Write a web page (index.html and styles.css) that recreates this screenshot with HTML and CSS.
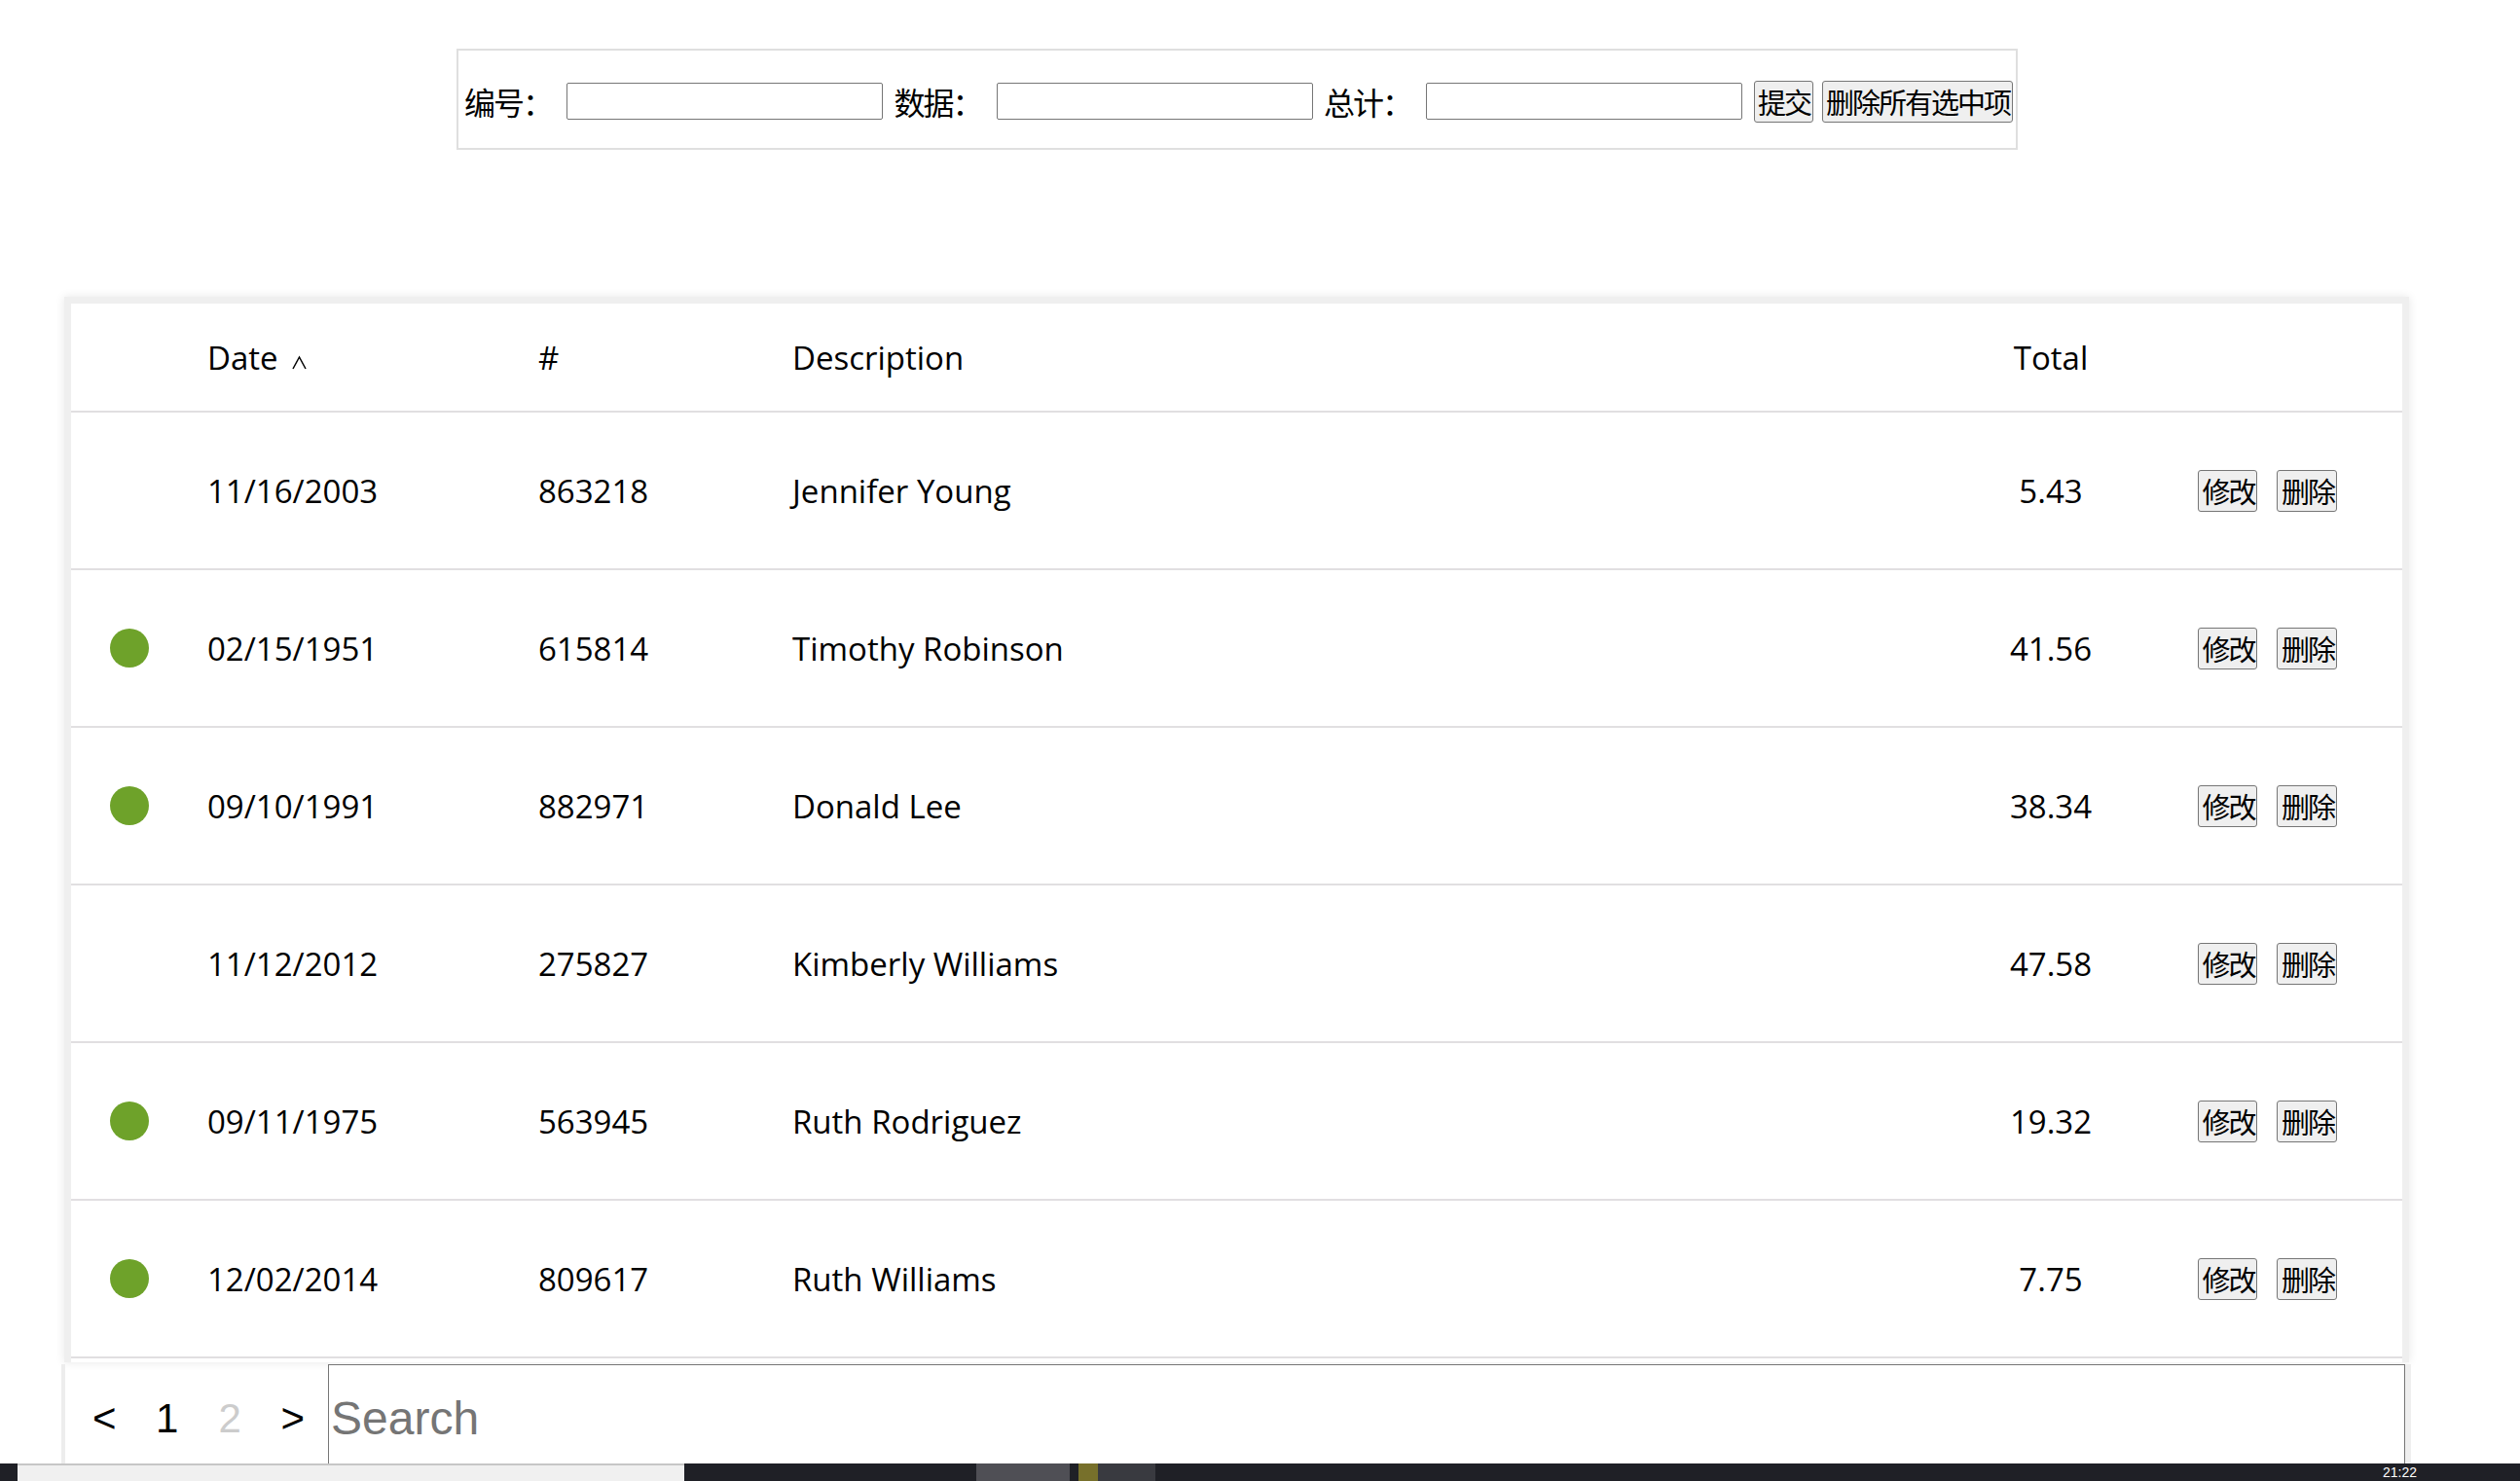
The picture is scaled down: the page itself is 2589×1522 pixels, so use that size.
FILE: index.html
```html
<!DOCTYPE html>
<html lang="zh-CN">
<head>
<meta charset="utf-8">
<title>Table</title>
<link rel="stylesheet" href="styles.css">
</head>
<body>
<form class="toolbar">
  <label class="lbl">编号：</label><input class="field" type="text">
  <label class="lbl">数据：</label><input class="field" type="text">
  <label class="lbl">总计：</label><input class="field last" type="text">
  <button type="button" class="btn">提交</button>
  <button type="button" class="btn">删除所有选中项</button>
</form>

<div class="card">
  <div class="row head">
    <div></div>
    <div class="sortable">Date <svg class="caret" width="17" height="15" viewBox="0 0 17 15"><polyline points="2,14 8.5,2 15,14" fill="none" stroke="#000" stroke-width="1.5"/></svg></div>
    <div>#</div>
    <div>Description</div>
    <div class="num">Total</div>
    <div></div>
  </div>
  <div class="row">
    <div></div>
    <div>11/16/2003</div><div>863218</div><div>Jennifer Young</div><div class="num">5.43</div>
    <div class="acts"><button class="btn sm">修改</button><button class="btn sm">删除</button></div>
  </div>
  <div class="row">
    <div><span class="dot"></span></div>
    <div>02/15/1951</div><div>615814</div><div>Timothy Robinson</div><div class="num">41.56</div>
    <div class="acts"><button class="btn sm">修改</button><button class="btn sm">删除</button></div>
  </div>
  <div class="row">
    <div><span class="dot"></span></div>
    <div>09/10/1991</div><div>882971</div><div>Donald Lee</div><div class="num">38.34</div>
    <div class="acts"><button class="btn sm">修改</button><button class="btn sm">删除</button></div>
  </div>
  <div class="row">
    <div></div>
    <div>11/12/2012</div><div>275827</div><div>Kimberly Williams</div><div class="num">47.58</div>
    <div class="acts"><button class="btn sm">修改</button><button class="btn sm">删除</button></div>
  </div>
  <div class="row">
    <div><span class="dot"></span></div>
    <div>09/11/1975</div><div>563945</div><div>Ruth Rodriguez</div><div class="num">19.32</div>
    <div class="acts"><button class="btn sm">修改</button><button class="btn sm">删除</button></div>
  </div>
  <div class="row">
    <div><span class="dot"></span></div>
    <div>12/02/2014</div><div>809617</div><div>Ruth Williams</div><div class="num">7.75</div>
    <div class="acts"><button class="btn sm">修改</button><button class="btn sm">删除</button></div>
  </div>
</div>

<div class="footer">
  <div class="pager">
    <span class="pg">&lt;</span>
    <span class="pg">1</span>
    <span class="pg off">2</span>
    <span class="pg">&gt;</span>
  </div>
  <input class="search" type="text" placeholder="Search">
</div>

<div class="taskbar">
  <div class="tb-edge"></div>
  <div class="tb-search"></div>
  <div class="tb-gap"></div>
  <div class="tb-app active"></div>
  <div class="tb-gap2"></div>
  <div class="tb-olive"></div>
  <div class="tb-app2"></div>
  <div class="tb-fill"></div>
  <div class="tb-clock">21:22</div>
</div>
</body>
</html>
```

FILE: styles.css
```css
html, body {
  margin: 0;
  padding: 0;
  background: #fff;
}
body {
  font-family: "Open Sans", "Noto Sans", sans-serif;
  color: #000;
  height: 1522px;
  overflow: hidden;
}

/* top form */
.toolbar {
  box-sizing: border-box;
  width: 1604px;
  height: 104px;
  margin: 50px 0 0 469px;
  border: 2px solid #dfdfdf;
  padding: 4px 6px 0 6px;
  display: flex;
  align-items: center;
  font-family: "Noto Sans CJK SC", "Microsoft YaHei", sans-serif;
  font-size: 29px;
}
.lbl {
  width: 105px;
  flex: none;
  font-family: "Noto Sans CJK SC", "Microsoft YaHei", sans-serif;
  font-size: 32px;
  letter-spacing: -2px;
  white-space: nowrap;
  line-height: 1;
}
.field {
  box-sizing: border-box;
  flex: none;
  width: 325px;
  height: 38px;
  border: 1px solid #767676;
  border-radius: 2px;
  margin: 0 11.5px 0 0;
  padding: 0 4px;
}
.field.last { margin-right: 12px; }
.btn {
  box-sizing: border-box;
  flex: none;
  height: 43px;
  padding: 0 2px 0 3px;
  margin: 0 9px 0 0;
  border: 1px solid #767676;
  border-radius: 3px;
  background: #efefef;
  color: #000;
  font-family: "Noto Sans CJK SC", "Microsoft YaHei", sans-serif;
  font-size: 29px;
  letter-spacing: -2px;
  line-height: 1;
  white-space: nowrap;
}

/* card / table */
.card {
  box-sizing: border-box;
  width: 2409px;
  margin: 151px 0 0 66px;
  border: 7px solid #efefef;
  border-bottom: 0;
  padding-bottom: 4px;
  background: #fff;
  box-shadow: 0 0 9px rgba(0, 0, 0, 0.1);
}
.row {
  box-sizing: border-box;
  display: grid;
  grid-template-columns: 140px 340px 261px 1fr 236px 243px;
  align-items: center;
  height: 162px;
  border-bottom: 2px solid #e1dfe1;
  font-size: 33px;
  white-space: nowrap;
}
.row.head { height: 112px; }
.num { text-align: center; }
.sortable { display: flex; align-items: center; }
.caret { margin: 10px 0 0 13px; }
.dot {
  display: block;
  width: 40px;
  height: 40px;
  margin-left: 40px;
  border-radius: 50%;
  background: #6ea22a;
}
.acts {
  display: flex;
  align-items: center;
  padding-left: 33px;
  gap: 20px;
}
.btn.sm {
  width: 61px;
  height: 43px;
  padding: 0 0 0 2px;
  margin: 0;
  font-size: 29px;
  letter-spacing: -2px;
  text-align: center;
}
.btn.sm + .btn.sm { width: 62px; }

/* footer */
.footer {
  box-sizing: border-box;
  display: flex;
  width: 2414px;
  height: 112px;
  margin: 2px 0 0 63px;
  border-left: 4px solid #ededed;
  border-right: 6px solid #efefef;
}
.pager {
  width: 270px;
  flex: none;
  display: flex;
  align-items: center;
  padding-left: 8px;
  box-sizing: border-box;
  font-family: "Liberation Sans", Arial, sans-serif;
  font-size: 42px;
}
.pg {
  width: 64.5px;
  text-align: center;
  line-height: 1;
}
.pg.off { color: #cccccc; }
.search {
  flex: 1;
  box-sizing: border-box;
  height: 110px;
  margin: 0;
  border: 1px solid #767676;
  border-radius: 0;
  padding: 0 2px;
  font-family: "Liberation Sans", Arial, sans-serif;
  font-size: 48px;
}
.search::placeholder { color: #757575; }

/* OS taskbar overlay */
.taskbar {
  position: fixed;
  left: 0;
  right: 0;
  bottom: 0;
  height: 18px;
  display: flex;
  background: #1f2026;
  overflow: hidden;
}
.tb-edge { width: 18px; flex: none; }
.tb-search {
  width: 685px;
  flex: none;
  background: #f0f0f0;
  border-top: 2px solid #c6c6c6;
  box-sizing: border-box;
}
.tb-gap { width: 300px; flex: none; }
.tb-app { width: 96px; flex: none; background: #4f4f55; }
.tb-gap2 { width: 9px; flex: none; }
.tb-olive { width: 20px; flex: none; background: #77702b; }
.tb-app2 { width: 59px; flex: none; background: #393a40; }
.tb-fill { flex: 1; }
.tb-clock {
  position: absolute;
  left: 2448px;
  top: 2px;
  color: #fff;
  font-family: "Liberation Sans", Arial, sans-serif;
  font-size: 14px;
  line-height: 1;
}
```
